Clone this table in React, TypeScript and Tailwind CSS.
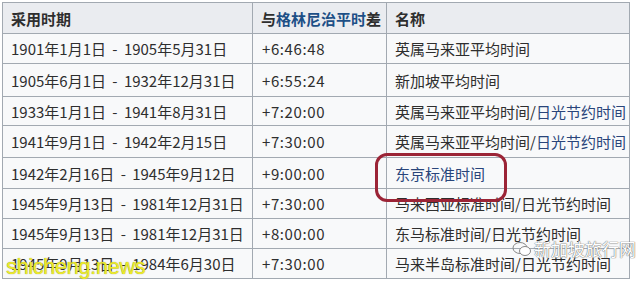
import React from 'react'

const blue = 'text-[#29457a]'

const rows: { period: string; offset: string; name: React.ReactNode; h: string }[] = [
  { period: '1901年1月1日 - 1905年5月31日', offset: '+6:46:48', name: '英属马来亚平均时间', h: 'h-[30px]' },
  { period: '1905年6月1日 - 1932年12月31日', offset: '+6:55:24', name: '新加坡平均时间', h: 'h-[33px]' },
  {
    period: '1933年1月1日 - 1941年8月31日',
    offset: '+7:20:00',
    name: (
      <>
        英属马来亚平均时间/<span className={blue}>日光节约时间</span>
      </>
    ),
    h: 'h-[29px]',
  },
  {
    period: '1941年9月1日 - 1942年2月15日',
    offset: '+7:30:00',
    name: (
      <>
        英属马来亚平均时间/<span className={blue}>日光节约时间</span>
      </>
    ),
    h: 'h-[32px]',
  },
  {
    period: '1942年2月16日 - 1945年9月12日',
    offset: '+9:00:00',
    name: <span className={blue}>东京标准时间</span>,
    h: 'h-[31px]',
  },
  { period: '1945年9月13日 - 1981年12月31日', offset: '+7:30:00', name: '马来西亚标准时间/日光节约时间', h: 'h-[30px]' },
  { period: '1945年9月13日 - 1981年12月31日', offset: '+8:00:00', name: '东马标准时间/日光节约时间', h: 'h-[30px]' },
  { period: '1945年9月13日 - 1984年6月30日', offset: '+7:30:00', name: '马来半岛标准时间/日光节约时间', h: 'h-[30px]' },
]

export default function App() {
  return (
    <div
      className="relative w-[636px] h-[282px] bg-white overflow-hidden text-[#2e2e2e]"
      style={{ fontFamily: '"Noto Sans CJK SC", "Noto Sans", sans-serif' }}
    >
      <table className="ml-[2px] mt-[2px] w-[627px] table-fixed border-collapse bg-[#f8f9fa] text-[15px] leading-none">
        <colgroup>
          <col className="w-[250px]" />
          <col className="w-[134px]" />
          <col className="w-[243px]" />
        </colgroup>
        <thead>
          <tr className="h-[31px] bg-[#eaecf0]">
            <th className="border border-[#a2a9b1] pl-[8px] text-left font-bold whitespace-nowrap">采用时期</th>
            <th className="border border-[#a2a9b1] pl-[8px] text-left font-bold whitespace-nowrap">
              与<span className="text-[#1d4f86]">格林尼治平时</span>差
            </th>
            <th className="border border-[#a2a9b1] pl-[8px] text-left font-bold whitespace-nowrap">名称</th>
          </tr>
        </thead>
        <tbody>
          {rows.map((r, i) => (
            <tr key={i} className={r.h}>
              <td className="border border-[#a2a9b1] pl-[8px] whitespace-nowrap word-spacing">
                <span className="[word-spacing:3px]">{r.period}</span>
              </td>
              <td className="border border-[#a2a9b1] pl-[9px] tracking-[0.6px] whitespace-nowrap">{r.offset}</td>
              <td className="border border-[#a2a9b1] pl-[8px] whitespace-nowrap overflow-hidden">{r.name}</td>
            </tr>
          ))}
        </tbody>
      </table>

      {/* red highlight */}
      <div className="absolute left-[375px] top-[153px] w-[132px] h-[49px] rounded-[12px] border-[3px] border-[#9b2436]" />

      {/* watermarks */}
      <div
        className="absolute left-[6px] top-[250px] text-[22px] text-[#ecea2a] tracking-[-0.5px]"
        style={{ fontFamily: '"Liberation Sans", sans-serif', textShadow: '0 0 1px #8a8a20' }}
      >
        shicheng.news
      </div>
      <div
        className="absolute left-[512px] top-[236px] flex items-center gap-[2px] text-[17px] text-white"
        style={{ textShadow: '0 0 1px #666, 0 0 1px #666' }}
      >
        <svg width="20" height="16" viewBox="0 0 20 16" fill="none" stroke="#888" strokeWidth="1">
          <ellipse cx="8" cy="7" rx="7" ry="5.5" />
          <ellipse cx="13" cy="10" rx="5.5" ry="4.5" fill="white" />
        </svg>
        <span>新加坡旅行网</span>
      </div>
    </div>
  )
}
